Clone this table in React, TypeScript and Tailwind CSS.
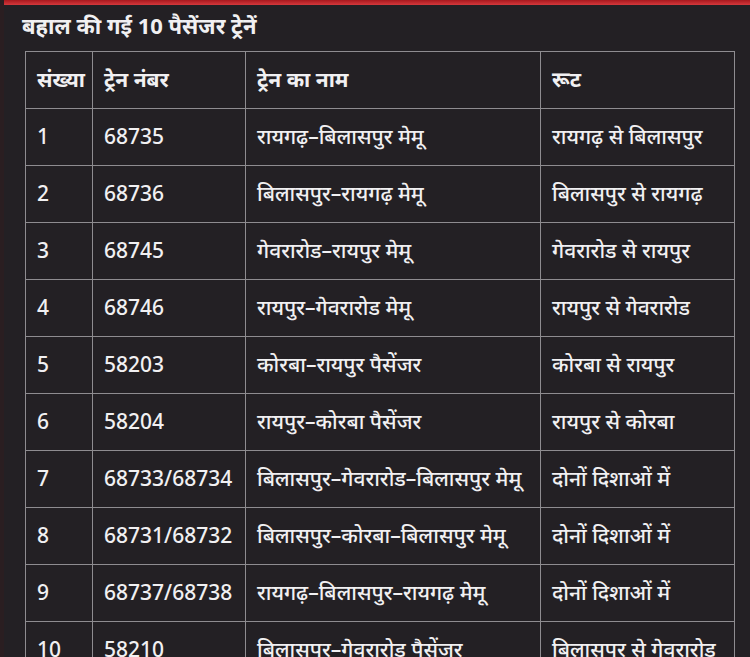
const rows = [
  ['1', '68735', 'रायगढ़–बिलासपुर मेमू', 'रायगढ़ से बिलासपुर'],
  ['2', '68736', 'बिलासपुर–रायगढ़ मेमू', 'बिलासपुर से रायगढ़'],
  ['3', '68745', 'गेवरारोड–रायपुर मेमू', 'गेवरारोड से रायपुर'],
  ['4', '68746', 'रायपुर–गेवरारोड मेमू', 'रायपुर से गेवरारोड'],
  ['5', '58203', 'कोरबा–रायपुर पैसेंजर', 'कोरबा से रायपुर'],
  ['6', '58204', 'रायपुर–कोरबा पैसेंजर', 'रायपुर से कोरबा'],
  ['7', '68733/68734', 'बिलासपुर–गेवरारोड–बिलासपुर मेमू', 'दोनों दिशाओं में'],
  ['8', '68731/68732', 'बिलासपुर–कोरबा–बिलासपुर मेमू', 'दोनों दिशाओं में'],
  ['9', '68737/68738', 'रायगढ़–बिलासपुर–रायगढ़ मेमू', 'दोनों दिशाओं में'],
  ['10', '58210', 'बिलासपुर–गेवरारोड पैसेंजर', 'बिलासपुर से गेवरारोड'],
];

const cell = 'border border-[#8e8c90] px-[11px] align-middle';

export default function App() {
  return (
    <div
      className="w-[750px] h-[657px] overflow-hidden bg-[#232024] text-[#f1f0f2] border-l-[4px] border-[#2a1e21]"
      style={{ fontFamily: '"Noto Sans", "Open Sans", sans-serif' }}
    >
      <div className="-ml-[4px] h-[5px] bg-gradient-to-b from-[#a8181e] to-[#d4383c]" />
      <div className="h-[46px] pl-[18px] pt-[4px]">
        <h2 className="text-[22px] font-bold leading-[32px]">
          बहाल की गई 10 पैसेंजर ट्रेनें
        </h2>
      </div>
      <table className="ml-[21px] w-[709px] table-fixed border-collapse text-[21px] font-medium">
        <colgroup>
          <col className="w-[67px]" />
          <col className="w-[153px]" />
          <col className="w-[295px]" />
          <col className="w-[194px]" />
        </colgroup>
        <thead>
          <tr className="h-[57px] text-left font-bold">
            <th className={cell}>संख्या</th>
            <th className={cell}>ट्रेन नंबर</th>
            <th className={cell}>ट्रेन का नाम</th>
            <th className={cell}>रूट</th>
          </tr>
        </thead>
        <tbody>
          {rows.map((r) => (
            <tr key={r[0]} className="h-[57px]">
              {r.map((c, i) => (
                <td key={i} className={`${cell} whitespace-nowrap`}>
                  {c}
                </td>
              ))}
            </tr>
          ))}
        </tbody>
      </table>
    </div>
  );
}
